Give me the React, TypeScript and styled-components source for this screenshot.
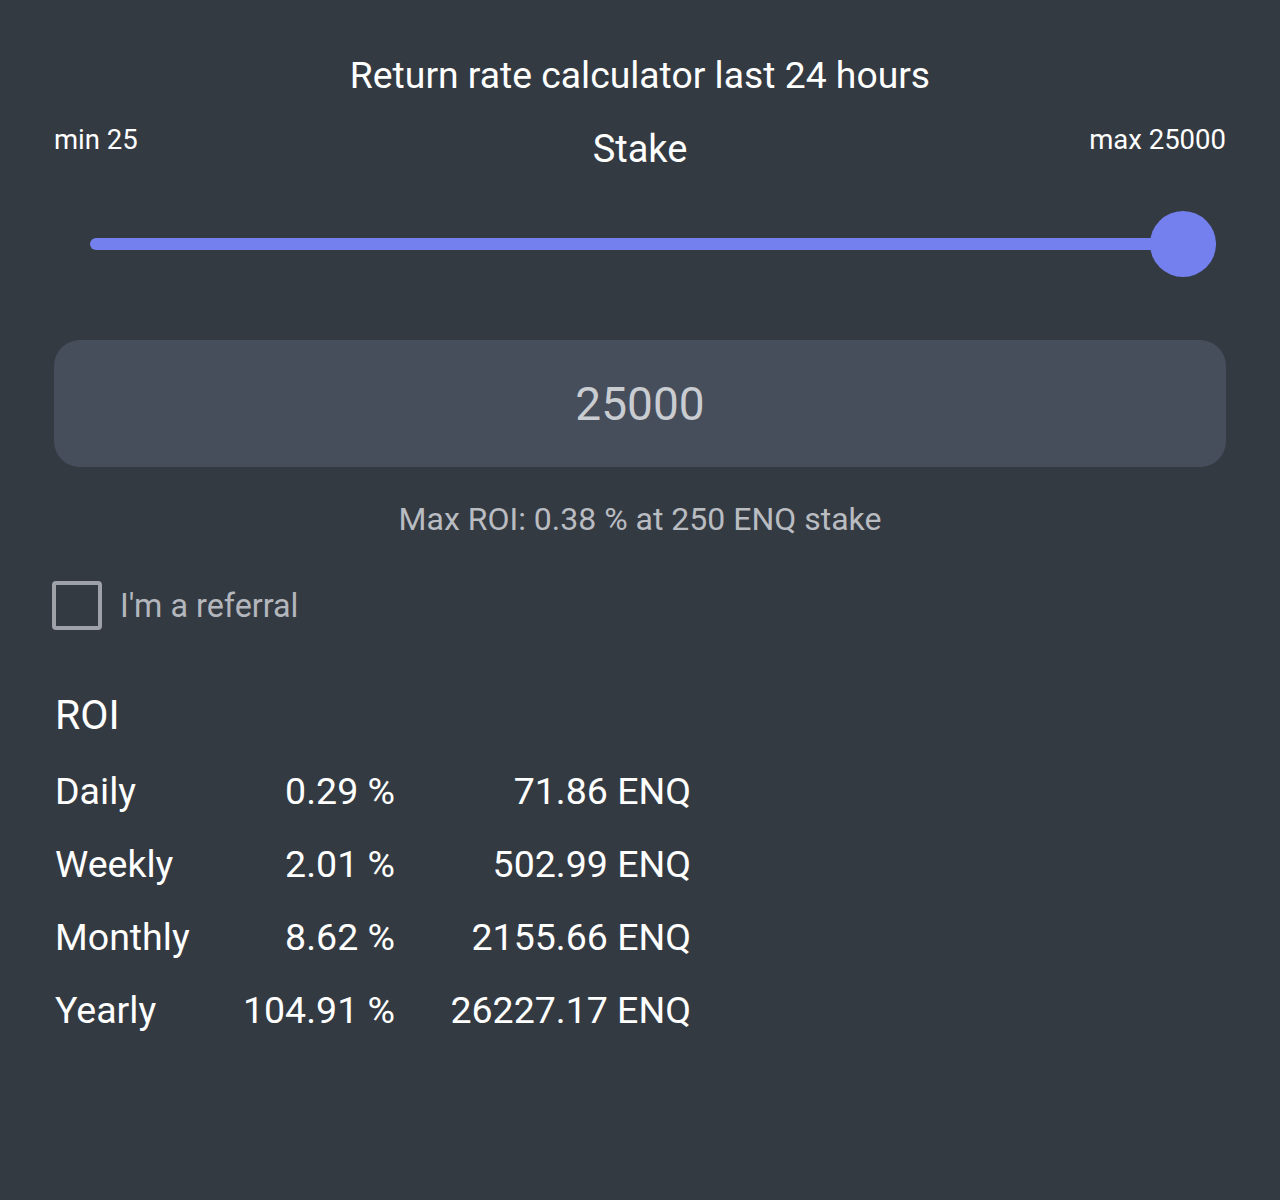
import React from "react";
import styled, { createGlobalStyle } from "styled-components";

const Global = createGlobalStyle`
  html, body { margin: 0; padding: 0; background: #343a42; }
  body { font-family: Roboto, "Liberation Sans", sans-serif; color: #ffffff; }
`;

const Page = styled.div`
  width: 1280px;
  height: 1200px;
  box-sizing: border-box;
  background: #343a42;
  padding: 52px 54px 0 54px;
  display: flex;
  flex-direction: column;
`;

const Title = styled.h1`
  margin: 0;
  text-align: center;
  font-size: 37.3px;
  font-weight: 400;
  line-height: 46px;
  color: #ffffff;
`;

const LabelRow = styled.div`
  display: flex;
  align-items: flex-start;
  justify-content: space-between;
  margin-top: 26px;
`;

const Limit = styled.span<{ $align: string }>`
  font-size: 27.5px;
  line-height: 32px;
  color: #ffffff;
  width: 180px;
  text-align: ${(p) => p.$align};
`;

const StakeLabel = styled.span`
  font-size: 38px;
  line-height: 42px;
  margin-top: 4px;
  color: #ffffff;
`;

const SliderWrap = styled.div`
  position: relative;
  margin: 41px 10px 0 36px;
  height: 66px;
  display: flex;
  align-items: center;
`;

const Track = styled.div`
  height: 12px;
  width: 100%;
  border-radius: 6px;
  background: #7480ee;
`;

const Thumb = styled.div`
  position: absolute;
  right: 0;
  top: 0;
  width: 66px;
  height: 66px;
  border-radius: 50%;
  background: #7480ee;
`;

const ValueBox = styled.div`
  margin-top: 63px;
  height: 127px;
  border-radius: 26px;
  background: #474e5b;
  display: flex;
  align-items: center;
  justify-content: center;
  font-size: 46px;
  color: #c9ccd1;
`;

const Hint = styled.p`
  margin: 32px 0 0 0;
  text-align: center;
  font-size: 32px;
  line-height: 40px;
  color: #b9bcc1;
`;

const CheckRow = styled.label`
  display: flex;
  align-items: center;
  gap: 18px;
  margin-top: 42px;
  margin-left: -2px;
`;

const Box = styled.span`
  box-sizing: border-box;
  width: 50px;
  height: 49px;
  border: 4px solid #9ea2a8;
  border-radius: 4px;
`;

const CheckText = styled.span`
  font-size: 32.3px;
  color: #b3b6bc;
`;

const RoiHead = styled.h2`
  margin: 62px 0 0 1px;
  font-size: 41px;
  font-weight: 400;
  line-height: 46px;
  color: #ffffff;
`;

const Table = styled.div`
  display: grid;
  grid-template-columns: 181px 159px 296px;
  grid-auto-rows: 73px;
  margin-top: 16px;
  margin-left: 1px;
  align-items: center;
`;

const Cell = styled.span<{ $right?: boolean }>`
  font-size: 37.5px;
  color: #ffffff;
  text-align: ${(p) => (p.$right ? "right" : "left")};
  white-space: nowrap;
`;

const rows = [
  ["Daily", "0.29 %", "71.86 ENQ"],
  ["Weekly", "2.01 %", "502.99 ENQ"],
  ["Monthly", "8.62 %", "2155.66 ENQ"],
  ["Yearly", "104.91 %", "26227.17 ENQ"],
];

export default function App() {
  return (
    <>
      <Global />
      <Page>
        <Title>Return rate calculator last 24 hours</Title>
        <LabelRow>
          <Limit $align="left">min 25</Limit>
          <StakeLabel>Stake</StakeLabel>
          <Limit $align="right">max 25000</Limit>
        </LabelRow>
        <SliderWrap>
          <Track />
          <Thumb />
        </SliderWrap>
        <ValueBox>25000</ValueBox>
        <Hint>Max ROI: 0.38 % at 250 ENQ stake</Hint>
        <CheckRow>
          <Box />
          <CheckText>I'm a referral</CheckText>
        </CheckRow>
        <RoiHead>ROI</RoiHead>
        <Table>
          {rows.map((r) => (
            <React.Fragment key={r[0]}>
              <Cell>{r[0]}</Cell>
              <Cell $right>{r[1]}</Cell>
              <Cell $right>{r[2]}</Cell>
            </React.Fragment>
          ))}
        </Table>
      </Page>
    </>
  );
}
